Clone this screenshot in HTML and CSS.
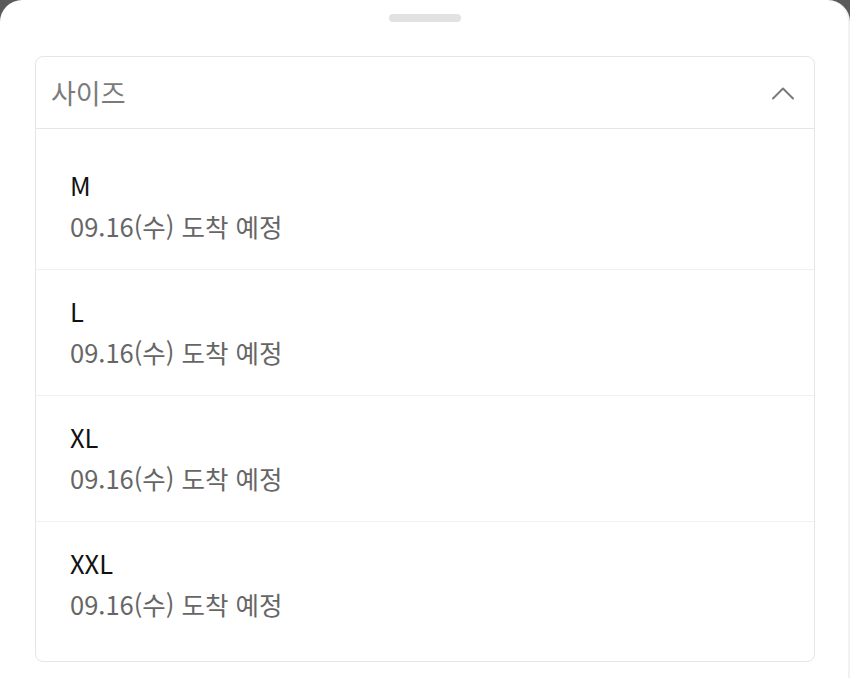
FILE: index.html
```html
<!DOCTYPE html>
<html lang="ko">
<head>
<meta charset="utf-8">
<title>사이즈 선택</title>
<link rel="stylesheet" href="styles.css">
</head>
<body>
  <div class="sheet">
    <div class="handle"></div>
    <div class="select">
      <div class="select-head">
        <span class="select-title">사이즈</span>
        <svg class="chevron" width="24" height="14" viewBox="0 0 24 14" aria-hidden="true">
          <polyline points="2,12.5 12,2.5 22,12.5" fill="none" stroke="#7a7a7a" stroke-width="2" stroke-linecap="round" stroke-linejoin="round"/>
        </svg>
      </div>
      <ul class="options">
        <li class="option"><span class="opt-name">M</span><span class="opt-date">09.16(수) 도착 예정</span></li>
        <li class="option"><span class="opt-name">L</span><span class="opt-date">09.16(수) 도착 예정</span></li>
        <li class="option"><span class="opt-name">XL</span><span class="opt-date">09.16(수) 도착 예정</span></li>
        <li class="option"><span class="opt-name">XXL</span><span class="opt-date">09.16(수) 도착 예정</span></li>
      </ul>
    </div>
  </div>
</body>
</html>
```

FILE: styles.css
```css
* { box-sizing: border-box; }

html, body {
  margin: 0;
  height: 100%;
}

body {
  background: #5a5a5a;
  font-family: "Noto Sans CJK KR", "Noto Sans", sans-serif;
  overflow: hidden;
}

.sheet {
  height: 100%;
  background: #ffffff;
  border-radius: 22px 22px 0 0;
  padding: 14px 33px 0 35px;
  display: flex;
  flex-direction: column;
  border-right: 2px solid #f1f1f1;
}

.handle {
  width: 72px;
  height: 8px;
  border-radius: 4px;
  background: #e2e2e2;
  align-self: center;
}

.select {
  margin-top: 34px;
  border: 1px solid #e6e6e6;
  border-radius: 8px;
}

.select-head {
  height: 72px;
  display: flex;
  align-items: center;
  justify-content: space-between;
  padding: 0 19px 0 15px;
  border-bottom: 1px solid #e6e6e6;
}

.select-title {
  font-size: 27px;
  color: #7b7b7b;
}

.chevron {
  display: block;
}

.options {
  list-style: none;
  margin: 0;
  padding: 15px 0 14px;
}

.option {
  display: flex;
  flex-direction: column;
  padding: 21px 34px 24px;
  border-bottom: 1px solid #f1f1f1;
}

.option:last-child {
  border-bottom: none;
}

.opt-name {
  font-size: 25.5px;
  line-height: 39px;
  color: #111111;
}

.opt-date {
  margin-top: 2px;
  font-size: 25.5px;
  line-height: 39px;
  color: #666666;
}
```
